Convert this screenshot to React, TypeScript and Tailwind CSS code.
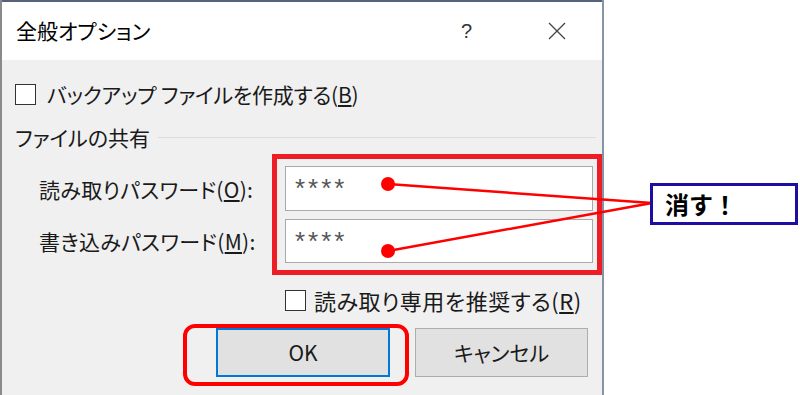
const jp = { fontFamily: '"Noto Sans CJK JP", "Noto Sans", sans-serif', fontFeatureSettings: '"palt"' };

function Checkbox() {
  return <div className="w-[21px] h-[21px] shrink-0 border border-[#333] bg-white" />;
}

function PasswordRow({ label, hot, rest, tall }: { label: string; hot: string; rest: string; tall?: boolean }) {
  return (
    <div className="flex items-center">
      <div className="w-[283px] pl-[37px] text-[21px] leading-[24px] tracking-[0.3px] text-[#1a1a1a]">
        {label}(<span className="underline underline-offset-2">{hot}</span>){rest}
      </div>
      <div className={`w-[308px] ${tall ? 'h-[45px]' : 'h-[44px]'} bg-white border border-[#a9a9a9] pl-[9px] pt-[6px]`}>
        <span
          className="text-[26px] leading-[30px] tracking-[3px] text-[#555]"
          style={{ fontFamily: '"Liberation Sans", sans-serif' }}
        >
          ****
        </span>
      </div>
    </div>
  );
}

export default function App() {
  return (
    <div className="relative w-[800px] h-[395px] overflow-hidden bg-white flex" style={jp}>
      {/* Dialog */}
      <div className="w-[604px] h-full flex flex-col border-l-2 border-l-[#8a8a8a] border-r-2 border-r-[#8793a6]">
        <div className="h-[2px] bg-[#56627a]" />
        <div className="h-[58px] bg-white flex items-center">
          <span className="pl-[14px] text-[21px] text-black">全般オプション</span>
          <span className="ml-auto mr-[76px] text-[20px] font-light text-[#333]" style={{ fontFamily: '"Liberation Sans", sans-serif' }}>?</span>
          <svg width="18" height="18" viewBox="0 0 18 18" className="mr-[36px]">
            <path d="M1 1 L17 17 M17 1 L1 17" stroke="#444" strokeWidth="1.3" />
          </svg>
        </div>

        <div className="flex-1 bg-[#f0f0f0] flex flex-col">
          <div className="mt-[23px] flex items-center pl-[13px] h-[22px]">
            <Checkbox />
            <span className="ml-[11px] text-[21px] leading-[22px] tracking-[-0.2px] text-[#1a1a1a]">
              バックアップ ファイルを作成する(<span className="underline underline-offset-2">B</span>)
            </span>
          </div>

          <div className="mt-[21px] flex items-center h-[22px] pl-[13px]">
            <span className="text-[21px] leading-[22px] text-[#1a1a1a]">ファイルの共有</span>
            <div className="flex-1 h-px bg-[#dcdcdc] ml-[8px] mr-[6px]" />
          </div>

          <div className="mt-[18px] flex flex-col gap-[8px]">
            <PasswordRow label="読み取りパスワード" hot="O" rest=":" tall />
            <PasswordRow label="書き込みパスワード" hot="M" rest=":" />
          </div>

          <div className="mt-[26px] flex items-center h-[22px] pl-[283px]">
            <Checkbox />
            <span className="ml-[8px] text-[22px] leading-[22px] tracking-[0.5px] text-[#1a1a1a]">
              読み取り専用を推奨する(<span className="underline underline-offset-2">R</span>)
            </span>
          </div>

          <div className="mt-[17px] flex gap-[25px] pl-[214px]">
            <button className="w-[174px] h-[49px] bg-[#e1e1e1] border-2 border-[#0078d7] text-[21px] text-[#1a1a1a]">
              OK
            </button>
            <button className="w-[173px] h-[49px] bg-[#e1e1e1] border border-[#adadad] text-[21px] text-[#1a1a1a]">
              キャンセル
            </button>
          </div>
        </div>
      </div>

      {/* Annotations */}
      <div className="absolute left-[272px] top-[154px] w-[330px] h-[121px] border-[5px] border-[#ee1c25] pointer-events-none" />
      <div className="absolute left-[183px] top-[324px] w-[226px] h-[62px] border-4 border-[#ff0000] rounded-[12px] pointer-events-none" />

      <svg className="absolute left-0 top-0 pointer-events-none" width="800" height="395">
        <line x1="388" y1="184" x2="652" y2="203" stroke="#ff0000" strokeWidth="2.5" />
        <line x1="388" y1="251" x2="652" y2="203" stroke="#ff0000" strokeWidth="2.5" />
        <circle cx="388" cy="184" r="7" fill="#ff0000" />
        <circle cx="388" cy="251" r="7" fill="#ff0000" />
      </svg>

      <div className="absolute left-[650px] top-[183px] w-[148px] h-[42px] border-[3px] border-[#1c0ea0] bg-white flex items-center pl-[12px]">
        <span className="text-[24px] font-bold text-black leading-none" style={{ fontFeatureSettings: 'normal' }}>消す！</span>
      </div>
    </div>
  );
}
